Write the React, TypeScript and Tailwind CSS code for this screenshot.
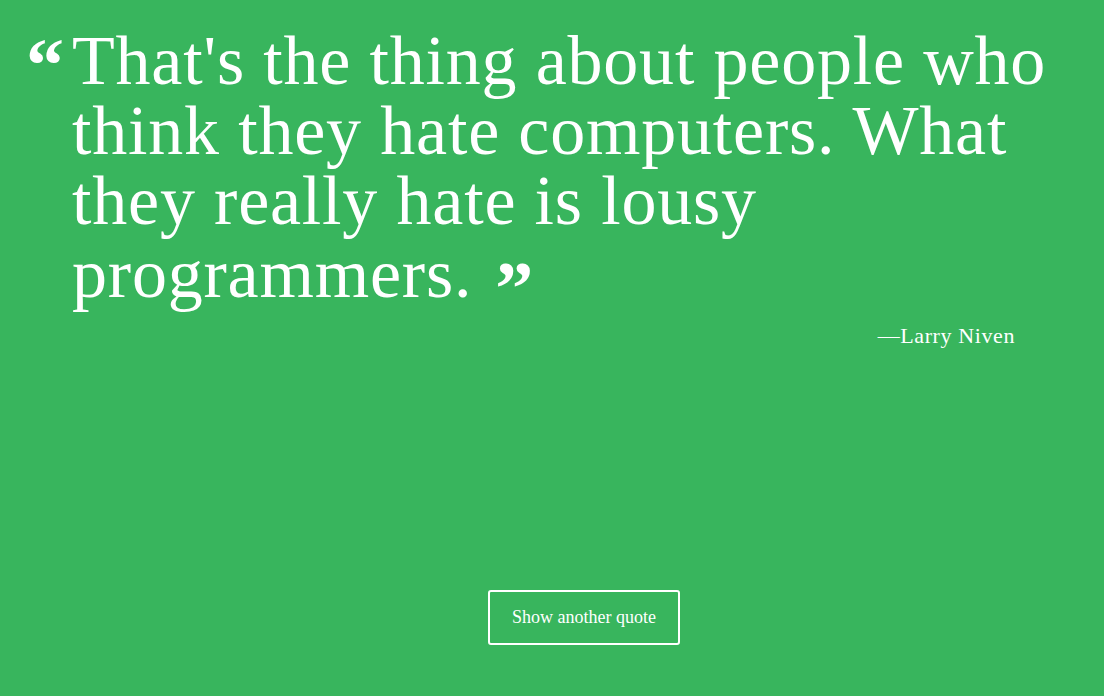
import React from "react";

const serif = { fontFamily: '"Liberation Serif", "DejaVu Serif", serif' };

export default function App() {
  return (
    <div className="min-h-[696px] w-full bg-[#38b55d] text-white" style={serif}>
      <div className="flex pt-[26px]">
        <div className="w-[72px] shrink-0 pl-[26px]">
          <span className="block text-[76px] font-bold leading-[70px] h-[70px] translate-y-[4px]">“</span>
        </div>
        <div className="flex-1 pr-[8px]">
          <p className="text-[70px] leading-[70px] tracking-[0.8px] pr-[20px]">
            That's the thing about people who think they hate computers. What they really hate is lousy programmers.
            <span className="ml-[23px] inline-block text-[76px] font-bold leading-[70px] translate-y-[17px]">”</span>
          </p>
          <div className="mt-[12px] pr-[81px] text-right text-[22px] tracking-[0.6px] leading-[30px]">—Larry Niven</div>
          <div className="mt-[239px] flex justify-center">
            <button className="h-[55px] w-[192px] rounded-[3px] border-2 border-white text-[18px]">
              Show another quote
            </button>
          </div>
        </div>
      </div>
    </div>
  );
}
